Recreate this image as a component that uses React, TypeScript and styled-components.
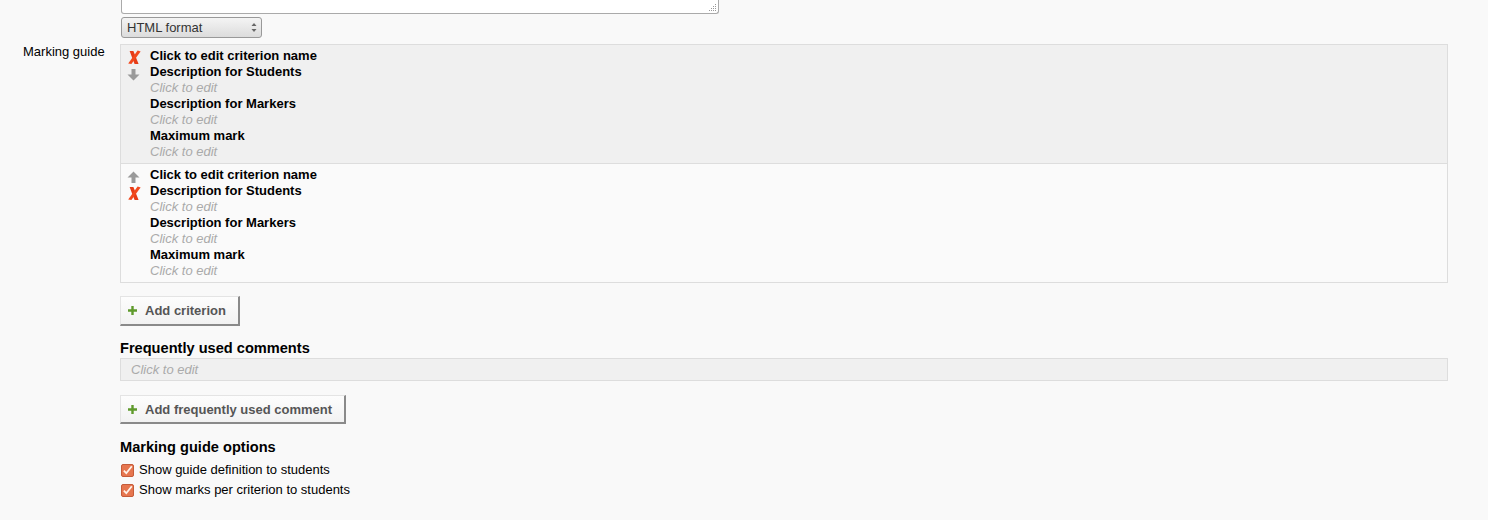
import React from "react";
import styled, { createGlobalStyle } from "styled-components";

const GlobalStyle = createGlobalStyle`
  html, body {
    margin: 0;
    padding: 0;
    background: #f9f9f9;
    font-family: "Liberation Sans", Arial, sans-serif;
    font-size: 13px;
    color: #000;
  }
`;

const Page = styled.div`
  display: flex;
  flex-direction: column;
  width: 1488px;
  height: 520px;
  overflow: hidden;
`;

const FormRow = styled.div`
  display: flex;
  align-items: flex-start;
`;

const LabelCell = styled.div<{ $top?: number }>`
  width: 120px;
  flex: none;
  box-sizing: border-box;
  padding: ${(p) => p.$top ?? 0}px 0 0 23px;
  font-size: 13px;
  line-height: 16px;
`;

const EditorBlock = styled.div`
  display: flex;
  flex-direction: column;
  align-items: flex-start;
  padding-left: 1px;
  height: 39px;
`;

const TextAreaTail = styled.div`
  position: relative;
  width: 596px;
  height: 13px;
  background: #fff;
  border: 1px solid #aaa;
  border-top: none;
  border-radius: 0 0 3px 3px;
`;

const Grip = styled.svg`
  position: absolute;
  right: 1px;
  bottom: 1px;
`;

const Select = styled.div`
  margin-top: 3px;
  width: 141px;
  height: 21px;
  box-sizing: border-box;
  border: 1px solid #999;
  border-radius: 3px;
  background: linear-gradient(#f4f4f4, #dcdcdc);
  display: flex;
  align-items: center;
  justify-content: space-between;
  padding: 0 4px 0 5px;
  color: #333;
  font-size: 13px;
`;

const Content = styled.div`
  display: flex;
  flex-direction: column;
  align-items: flex-start;
  padding-top: 5px;
`;

const CriteriaTable = styled.div`
  width: 1328px;
  box-sizing: border-box;
  border: 1px solid #ddd;
`;

const CriterionRow = styled.div<{ $odd: boolean }>`
  display: flex;
  background: ${(p) => (p.$odd ? "#f0f0f0" : "#fafafa")};
  padding: 3px 4px 3px 6px;
  & + & {
    border-top: 1px solid #ddd;
  }
`;

const Controls = styled.div`
  display: flex;
  flex-direction: column;
  width: 23px;
  padding-top: 1px;
`;

const IconSlot = styled.div`
  height: 17px;
  display: flex;
  align-items: center;
`;

const Fields = styled.div`
  display: flex;
  flex-direction: column;
  line-height: 16px;
`;

const FieldTitle = styled.div`
  font-weight: bold;
  font-size: 13px;
`;

const Placeholder = styled.div`
  font-style: italic;
  color: #aaa;
  font-size: 13px;
`;

const AddButton = styled.button<{ $top: number; $height: number }>`
  margin-top: ${(p) => p.$top}px;
  height: ${(p) => p.$height}px;
  display: flex;
  align-items: center;
  gap: 8px;
  padding: 0 12px 0 7px;
  font-family: "Liberation Sans", Arial, sans-serif;
  font-size: 13px;
  font-weight: bold;
  color: #555;
  background: linear-gradient(#fdfdfd, #f2f2f2);
  border-style: solid;
  border-width: 1px 2px 2px 1px;
  border-color: #e4e4e4 #8a8a8a #8a8a8a #e4e4e4;
  border-radius: 0;
`;

const SectionTitle = styled.div<{ $top: number }>`
  margin-top: ${(p) => p.$top}px;
  font-size: 14.6px;
  font-weight: bold;
  line-height: 17px;
`;

const CommentBox = styled.div`
  margin-top: 1px;
  width: 1328px;
  height: 23px;
  box-sizing: border-box;
  border: 1px solid #ddd;
  background: #f0f0f0;
  display: flex;
  align-items: center;
  padding-left: 10px;
`;

const OptionList = styled.div`
  display: flex;
  flex-direction: column;
  gap: 4px;
  margin-top: 6px;
`;

const OptionRow = styled.label`
  display: flex;
  align-items: center;
  gap: 5px;
  padding-left: 1px;
  font-size: 13px;
  line-height: 16px;
`;

const DeleteIcon = () => (
  <svg width="15" height="15" viewBox="0 0 15 15">
    <path d="M2.6 1 L6.4 1 L11.6 14 L7.6 14 Z" fill="#e63c17" />
    <path d="M10.6 0.6 L13.6 1.4 L4.4 14 L1.2 13.6 Z" fill="#f2491d" />
  </svg>
);

const ArrowIcon = ({ up }: { up?: boolean }) => (
  <svg width="13" height="12" viewBox="0 0 13 12" style={up ? { transform: "rotate(180deg)" } : undefined}>
    <path d="M4.5 0 H8.5 V5.5 H12.5 L6.5 11.5 L0.5 5.5 H4.5 Z" fill="#9a9a9a" />
  </svg>
);

const PlusIcon = () => (
  <svg width="9" height="9" viewBox="0 0 9 9">
    <path d="M3.3 0 H5.7 V3.3 H9 V5.7 H5.7 V9 H3.3 V5.7 H0 V3.3 H3.3 Z" fill="#5f9a2c" />
  </svg>
);

const CheckIcon = () => (
  <svg width="13" height="13" viewBox="0 0 13 13">
    <rect x="0.5" y="0.5" width="12" height="12" rx="1.5" fill="#e6764f" stroke="#c55c3a" />
    <path d="M2.8 6.6 L5.3 9.2 L10.8 2.2" fill="none" stroke="#fff3ea" strokeWidth="1.8" />
  </svg>
);

type Criterion = { first: "delete" | "up"; second: "delete" | "down" };

const criteria: Criterion[] = [
  { first: "delete", second: "down" },
  { first: "up", second: "delete" },
];

const gripDots = [
  [8, 2],
  [6, 4],
  [8, 4],
  [4, 6],
  [6, 6],
  [8, 6],
  [2, 8],
  [4, 8],
  [6, 8],
  [8, 8],
];

const CriterionBlock = ({ c, odd }: { c: Criterion; odd: boolean }) => (
  <CriterionRow $odd={odd}>
    <Controls>
      <IconSlot>{c.first === "delete" ? <DeleteIcon /> : <ArrowIcon up />}</IconSlot>
      <IconSlot>{c.second === "delete" ? <DeleteIcon /> : <ArrowIcon />}</IconSlot>
    </Controls>
    <Fields>
      <FieldTitle>Click to edit criterion name</FieldTitle>
      <FieldTitle>Description for Students</FieldTitle>
      <Placeholder>Click to edit</Placeholder>
      <FieldTitle>Description for Markers</FieldTitle>
      <Placeholder>Click to edit</Placeholder>
      <FieldTitle>Maximum mark</FieldTitle>
      <Placeholder>Click to edit</Placeholder>
    </Fields>
  </CriterionRow>
);

export default function App() {
  return (
    <>
      <GlobalStyle />
      <Page>
        <FormRow>
          <LabelCell />
          <EditorBlock>
            <TextAreaTail>
              <Grip width="10" height="10" viewBox="0 0 10 10">
                {gripDots.map(([x, y]) => (
                  <rect key={`${x}-${y}`} x={x} y={y} width="1" height="1" fill="#999" />
                ))}
              </Grip>
            </TextAreaTail>
            <Select>
              <span>HTML format</span>
              <svg width="6" height="11" viewBox="0 0 6 11">
                <path d="M3 1 L5.5 4 H0.5 Z" fill="#666" />
                <path d="M3 10 L5.5 7 H0.5 Z" fill="#666" />
              </svg>
            </Select>
          </EditorBlock>
        </FormRow>
        <FormRow>
          <LabelCell $top={5}>Marking guide</LabelCell>
          <Content>
            <CriteriaTable>
              {criteria.map((c, i) => (
                <CriterionBlock key={i} c={c} odd={i % 2 === 0} />
              ))}
            </CriteriaTable>
            <AddButton $top={13} $height={30}>
              <PlusIcon />
              Add criterion
            </AddButton>
            <SectionTitle $top={14}>Frequently used comments</SectionTitle>
            <CommentBox>
              <Placeholder>Click to edit</Placeholder>
            </CommentBox>
            <AddButton $top={14} $height={29}>
              <PlusIcon />
              Add frequently used comment
            </AddButton>
            <SectionTitle $top={15}>Marking guide options</SectionTitle>
            <OptionList>
              <OptionRow>
                <CheckIcon />
                Show guide definition to students
              </OptionRow>
              <OptionRow>
                <CheckIcon />
                Show marks per criterion to students
              </OptionRow>
            </OptionList>
          </Content>
        </FormRow>
      </Page>
    </>
  );
}
